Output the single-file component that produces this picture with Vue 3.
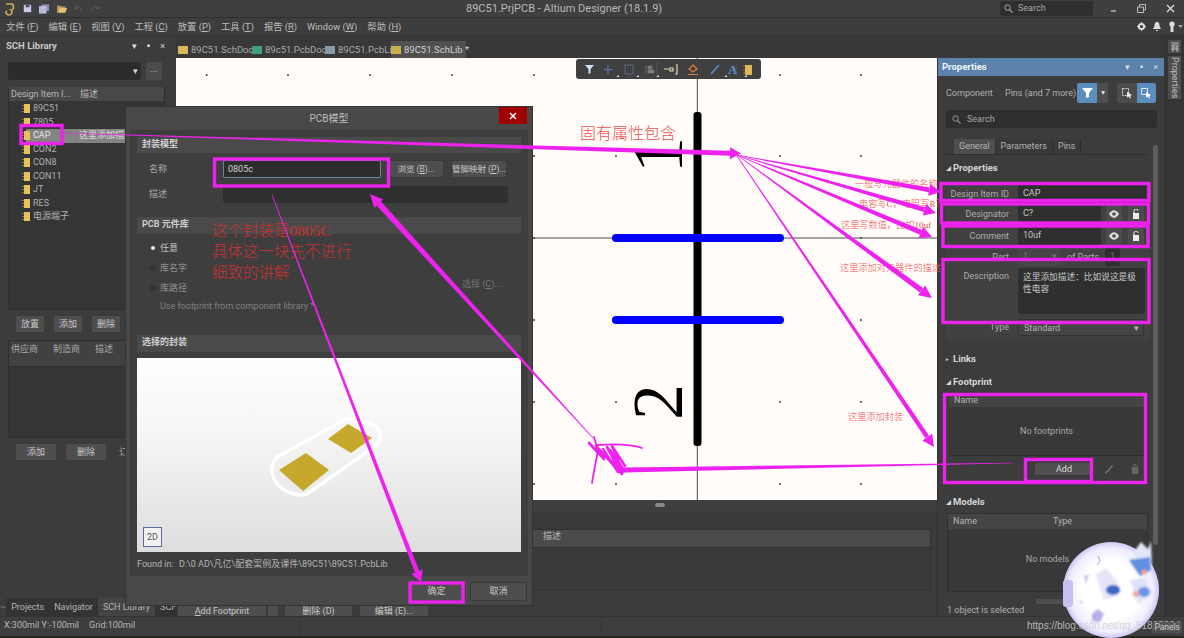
<script setup>
import { computed } from 'vue'

const menus = [
  ['文件', 'F'], ['编辑', 'E'], ['视图', 'V'], ['工程', 'C'], ['放置', 'P'],
  ['工具', 'T'], ['报告', 'R'], ['Window', 'W'], ['帮助', 'H'],
]
const docTabs = [
  { name: '89C51.SchDoc', color: '#d8b95a', width: 74 },
  { name: '89c51.PcbDoc', color: '#3fa07a', width: 73 },
  { name: '89C51.PcbLib', color: '#8a98a8', width: 66 },
  { name: '89C51.SchLib *', color: '#c9b24d', width: 75, active: true },
]
const components = ['89C51', '7805', 'CAP', 'CON2', 'CON8', 'CON11', 'JT', 'RES', '电源端子']
const gridX = [206.7, 288, 370, 452, 534, 616, 780, 861]
const gridY = [75, 156, 238, 320, 402, 484]

// Annotation strokes drawn on top of the screenshot: thin at the start, fat at the arrow tip.
const arrows = [
  { from: [63, 133], to: [741, 153.5], w: [0.6, 5], head: 11 },
  { from: [737, 155], to: [941, 192], w: [0.6, 5], head: 12 },
  { from: [737, 155], to: [936, 213], w: [0.6, 5], head: 12 },
  { from: [737, 155], to: [932, 237], w: [0.6, 5], head: 12 },
  { from: [737, 155], to: [932, 298], w: [0.6, 5.5], head: 13 },
  { from: [737, 156], to: [934, 447], w: [0.8, 4.5], head: 12 },
  { from: [593, 438], to: [370, 194], w: [0.8, 6], head: 13 },
  { from: [272, 195], to: [421, 582], w: [0.7, 4.5], head: 11 },
  { from: [1012, 463], to: [624, 470], w: [0.4, 5], head: 0 },
]
const arrowShapes = computed(() =>
  arrows.map(({ from, to, w, head }) => {
    const dx = to[0] - from[0]
    const dy = to[1] - from[1]
    const len = Math.hypot(dx, dy)
    const ux = dx / len
    const uy = dy / len
    const nx = -uy
    const ny = ux
    const ex = to[0] - ux * head
    const ey = to[1] - uy * head
    const body = [
      [from[0] + (nx * w[0]) / 2, from[1] + (ny * w[0]) / 2],
      [ex + (nx * w[1]) / 2, ey + (ny * w[1]) / 2],
      [ex - (nx * w[1]) / 2, ey - (ny * w[1]) / 2],
      [from[0] - (nx * w[0]) / 2, from[1] - (ny * w[0]) / 2],
    ]
    const tip = [[ex + nx * 6, ey + ny * 6], to, [ex - nx * 6, ey - ny * 6]]
    return {
      body: body.map((p) => p.join(',')).join(' '),
      tip: head ? tip.map((p) => p.join(',')).join(' ') : '',
    }
  })
)
const boxes = [
  [21, 125.5, 41, 18], [214.5, 159, 174, 27], [941, 183.5, 208, 17], [941.5, 204, 207, 19],
  [943, 226, 205, 20.5], [943, 259.5, 206, 63], [944.5, 394.5, 201, 88], [1025.5, 459.5, 66, 22],
  [410, 583, 53, 19],
]
const notes = [
  { text: '一般写元器件的名称', x: 855, y: 187, size: 9.2 },
  { text: '电容写C，电阻写R？', x: 859, y: 207, size: 9.2 },
  { text: '这里写数值，比如10uf', x: 841, y: 228, size: 9.2 },
  { text: '这里添加对元器件的描述', x: 840, y: 271, size: 9.2 },
  { text: '这里添加封装', x: 848, y: 420, size: 9.2 },
  { text: '固有属性包含', x: 580, y: 139, size: 16 },
]
</script>

<template>
  <div class="app">
    <header class="titlebar">
      <div class="quick">
        <svg width="12" height="14" viewBox="0 0 12 14"><path d="M3 2h4a3 3 0 0 1 1 6c2 1 1 5-2 5-3 0-4-3-2-4" fill="none" stroke="#c9a95c" stroke-width="1.6" /></svg>
        <svg width="9" height="9" viewBox="0 0 11 11"><path d="M1 1h9v9H1z" fill="#c8cce8" /><path d="M3 1h5v3H3z" fill="#555" /></svg>
        <svg width="10" height="10" viewBox="0 0 12 11"><path d="M3 0h9v8H3z" fill="#8f92b8" /><path d="M0 2h9v9H0z" fill="#b9bcd8" /></svg>
        <svg width="10" height="9" viewBox="0 0 13 11"><path d="M0 2h5l1 1h5v2H3L1 11H0z" fill="#b8985a" /><path d="M3 5h10l-2 6H1z" fill="#e2c074" /></svg>
        <svg width="9" height="8" viewBox="0 0 11 9"><path d="M1 4c3-3 7-3 9 3M1 1v3h3" fill="none" stroke="#5f5f5f" stroke-width="1.2" /></svg>
        <svg width="9" height="8" viewBox="0 0 11 9"><path d="M10 4C7 1 3 1 1 7M10 1v3H7" fill="none" stroke="#5f5f5f" stroke-width="1.2" /></svg>
      </div>
      <div class="app-title">89C51.PrjPCB - Altium Designer (18.1.9)</div>
      <div class="top-search">
        <svg width="9" height="9" viewBox="0 0 9 9"><circle cx="3.6" cy="3.6" r="2.7" fill="none" stroke="#aaa" /><path d="M5.6 5.6 8.6 8.6" stroke="#aaa" stroke-width="1.2" /></svg>
        Search
      </div>
      <div class="win-btns">
        <svg width="7" height="7" viewBox="0 0 7 7"><path d="M1 6h5" stroke="#bbb" stroke-width="1.4" /></svg>
        <svg width="9" height="9" viewBox="0 0 9 9"><path d="M.5 3h6v5.5h-6zM2.5 3V.5h6v5.5H7" fill="none" stroke="#bbb" /></svg>
        <svg width="9" height="9" viewBox="0 0 9 9"><path d="M1 1l7 7M8 1 1 8" stroke="#ddd" stroke-width="1.3" /></svg>
      </div>
    </header>

    <nav class="menubar">
      <span v-for="[label, key] in menus" :key="key" class="menu-item">{{ label }} (<u>{{ key }}</u>)</span>
      <div class="menu-right">
        <svg width="9" height="9" viewBox="0 0 9 9"><circle cx="4.5" cy="4.5" r="2.6" fill="none" stroke="#ddd" stroke-width="2" /><path d="M4.5 0v2M4.5 7v2M0 4.5h2M7 4.5h2" stroke="#ddd" /></svg>
        <svg width="8" height="9" viewBox="0 0 8 9"><path d="M4 0c2 0 2.500 2 2.500 4L8 7H0l1.500-3C1.500 2 2 0 4 0zM3 8h2v1H3z" fill="#ddd" /></svg>
        <svg width="15" height="11" viewBox="0 0 15 11"><circle cx="4" cy="3" r="2.600" fill="#ddd" /><path d="M2.500 5h3v6h-3z" fill="#ddd" /><path d="M10 4h5l-2.500 3z" fill="#aaa" /></svg>
      </div>
    </nav>

    <div class="main">
      <aside class="left">
        <div class="left-head">
          <b>SCH Library</b>
          <span class="head-icons">▾ <i>▪</i> ×</span>
        </div>
        <div class="picker">
          <div class="picker-field"><em>▾</em></div>
          <div class="picker-btn">...</div>
        </div>
        <div class="list">
          <div class="list-head"><span class="col-id">Design Item I...</span><span>描述</span></div>
          <div v-for="c in components" :key="c" class="list-row" :class="{ selected: c === 'CAP' }">
            <svg width="8" height="9" viewBox="0 0 8 9"><path d="M2 0h6v9H2z" fill="#e6c25a" /><path d="M0 1h2v1H0zM0 4h2v1H0zM0 7h2v1H0z" fill="#8a7434" /></svg>
            <span class="row-name">{{ c }}</span>
            <span v-if="c === 'CAP'" class="row-desc">这里添加描述</span>
          </div>
        </div>
        <div class="btn-row small">
          <button>放置</button><button>添加</button><button>删除</button>
        </div>
        <div class="supplier">
          <div class="supplier-head"><span>供应商</span><span>制造商</span><span>描述</span></div>
        </div>
        <div class="btn-row wide">
          <button>添加</button><button>删除</button><span class="cut">订</span>
        </div>
        <div class="panel-tabs">
          <span class="tilde">~</span>
          <span class="ptab">Projects</span><span class="ptab">Navigator</span>
          <span class="ptab on">SCH Library</span><span class="ptab">SCF</span>
        </div>
      </aside>

      <div class="center">
        <div class="doc-tabs">
          <div
            v-for="t in docTabs"
            :key="t.name"
            class="doc-tab"
            :class="{ active: t.active }"
            :style="{ width: t.width + 'px' }"
          >
            <i :style="{ background: t.color }"></i>{{ t.name }}
          </div>
        </div>
        <div class="work">
          <div class="work-main">
            <div class="canvas">
              <svg class="sheet" width="761" height="442" viewBox="176 58 761 442">
                <g fill="#222">
                  <template v-for="y in gridY" :key="y">
                    <rect v-for="x in gridX" :key="x" :x="x - 0.8" :y="y - 0.8" width="1.6" height="1.6" />
                  </template>
                </g>
                <path d="M697.300 58V500M176 238H937" stroke="#4a4a4a" />
                <rect x="693.500" y="112" width="8" height="334" rx="3" fill="#000" />
                <rect x="612" y="234" width="172" height="8" rx="4" fill="#0000ff" />
                <rect x="612" y="316" width="172" height="8" rx="4" fill="#0000ff" />
                <text class="digit" transform="translate(682 173) rotate(-90)">1</text>
                <text class="digit" transform="translate(682 420) rotate(-90)">2</text>
              </svg>
              <div class="float-bar">
                <svg width="185" height="20" viewBox="0 0 185 20">
                  <path d="M9 6h9l-3.500 4v4l-2 1v-5z" fill="#cfe6ee" />
                  <path d="M32 6v9M28 10.500h9" stroke="#5a72b8" stroke-width="1.200" />
                  <rect x="49" y="6" width="8" height="9" fill="none" stroke="#6f7fae" stroke-dasharray="1.500 1" />
                  <path d="M70 6v9M72 7h4v3h-4zM72 11h6v3h-6z" fill="#7d7d7d" stroke="#7d7d7d" stroke-width=".6" />
                  <path d="M88 10h5M94 9h3v3h-3zM101 5v10h-2" fill="none" stroke="#e8dcb0" stroke-width="1.200" />
                  <path d="M117 6l4 4-4 3-4-3zM112 15.500h10" fill="none" stroke="#e07b3c" stroke-width="1.200" />
                  <path d="M135 15l8-9" stroke="#5d95d8" stroke-width="1.400" />
                  <text class="tool-a" x="152" y="15">A</text>
                  <path d="M169 6h7v10h-7z" fill="#dcb956" />
                  <path d="M167 7h2M167 11h2M167 14h2" stroke="#8a7434" />
                  <path d="M81 3v14M160 3v14" stroke="#555" />
                  <path d="M40 18l3-2v2zM60 18l3-2v2zM80 18l3-2v2zM148 18l3-2v2zM168 18l3-2v2z" fill="#ddd" />
                </svg>
              </div>
            </div>
            <div class="splitter"><i></i></div>
            <div class="msg-table">
              <div class="msg-head"><span>描述</span></div>
            </div>
            <div class="bottom-btns">
              <button class="b1"><u>A</u>dd Footprint</button><button class="b2"></button>
              <button class="b3">删除 (D)</button><button class="b4">编辑 (E)...</button>
            </div>
          </div>

          <section class="props">
            <div class="props-head">
              <b>Properties</b>
              <span class="head-icons">▾ <i>▪</i> ×</span>
            </div>
            <div class="props-bar">
              <span class="p-kind">Component</span>
              <span class="p-pins">Pins (and 7 more)</span>
              <div class="filter-btn">
                <svg width="11" height="10" viewBox="0 0 11 10"><path d="M0 0h11L7 5v4L4 10V5z" fill="#fff" /></svg>
              </div>
              <div class="filter-drop">▾</div>
              <div class="sel-a">
                <svg width="11" height="11" viewBox="0 0 11 11"><path d="M.5.500h6v7h-6z" fill="none" stroke="#ddd" stroke-dasharray="2 1" /><path d="M5 4l5 3-2 1 1 2-1 .5-1-2-2 1z" fill="#eee" /></svg>
              </div>
              <div class="sel-b">
                <svg width="11" height="11" viewBox="0 0 11 11"><path d="M.5.500h6v6h-6z" fill="none" stroke="#e0e8f4" /><path d="M5 4l5 3-2 1 1 2-1 .5-1-2-2 1z" fill="#fff" /></svg>
              </div>
            </div>
            <div class="props-search">
              <svg width="9" height="9" viewBox="0 0 9 9"><circle cx="3.600" cy="3.600" r="2.700" fill="none" stroke="#999" /><path d="M5.600 5.600 8.600 8.600" stroke="#999" stroke-width="1.200" /></svg>
              Search
            </div>
            <div class="props-scroll"><i></i></div>
            <div class="props-tabs">
              <span class="on">General</span><span>Parameters</span><span>Pins</span>
            </div>
            <h4 class="sec sec-props"><em>◢</em>Properties</h4>
            <div class="group">
              <div class="row"><label>Design Item ID</label><div class="val grow">CAP</div></div>
              <div class="row"><label>Designator</label><div class="val short">C?</div>
                <span class="ico">
                  <svg width="10" height="8" viewBox="0 0 10 8"><path d="M0 4c3-5 7-5 10 0-3 5-7 5-10 0z" fill="#ddd" /><circle cx="5" cy="4" r="1.800" fill="#4c4c4c" /></svg>
                </span>
                <span class="ico">
                  <svg width="8" height="10" viewBox="0 0 8 10"><path d="M1 4h6v6H1z" fill="#eee" /><path d="M2 4V2a2 2 0 0 1 4 0" fill="none" stroke="#eee" /></svg>
                </span>
              </div>
              <div class="row gap"><label>Comment</label><div class="val short">10uf</div>
                <span class="ico">
                  <svg width="10" height="8" viewBox="0 0 10 8"><path d="M0 4c3-5 7-5 10 0-3 5-7 5-10 0z" fill="#ddd" /><circle cx="5" cy="4" r="1.800" fill="#4c4c4c" /></svg>
                </span>
                <span class="ico">
                  <svg width="8" height="10" viewBox="0 0 8 10"><path d="M1 4h6v6H1z" fill="#eee" /><path d="M2 4V2a2 2 0 0 1 4 0" fill="none" stroke="#eee" /></svg>
                </span>
              </div>
              <div class="row"><label>Part</label><div class="val part">1<em>▾</em></div><span class="of">of Parts</span><div class="val tiny">1</div></div>
              <div class="row desc"><label>Description</label><div class="val area">这里添加描述：比如说这是极性电容</div></div>
              <div class="row"><label>Type</label><div class="val select">Standard<em>▾</em></div></div>
            </div>
            <h4 class="sec sec-links"><em>▸</em>Links</h4>
            <h4 class="sec sec-foot"><em>◢</em>Footprint</h4>
            <div class="foot-table">
              <div class="t-head"><span>Name</span></div>
              <div class="t-empty">No footprints</div>
              <div class="t-actions">
                <button class="add">Add</button>
                <svg width="10" height="10" viewBox="0 0 10 10"><path d="M1 9l7-8 1 1-7 8z" fill="#777" /></svg>
                <svg width="8" height="10" viewBox="0 0 8 10"><path d="M0 1.500h8M1 3h6v7H1zM3 0h2v1H3z" fill="#666" stroke="#666" stroke-width=".5" /></svg>
              </div>
            </div>
            <h4 class="sec sec-models"><em>◢</em>Models</h4>
            <div class="models-table">
              <div class="t-head"><span class="m-name">Name</span><span>Type</span></div>
              <div class="m-empty">No models</div>
            </div>
            <div class="models-foot"><button></button></div>
            <div class="props-status">1 object is selected</div>
          </section>
        </div>
      </div>

      <aside class="strip">
        <div class="strip-icon">
          <svg width="10" height="10" viewBox="0 0 10 10"><path d="M1 1h8M2 3h6v2H2zM1 7h8M3 5v5M7 5v5" stroke="#bbb" fill="none" /></svg>
        </div>
        <div class="strip-tab">Properties</div>
      </aside>
    </div>

    <footer class="status">
      <span class="coords">X:300mil Y:-100mil</span>
      <span class="grid-size">Grid:100mil</span>
      <i class="div1"></i><i class="div2"></i>
    </footer>

    <!-- modal dialog over the workspace -->
    <div class="dialog">
      <div class="dlg-title">PCB模型
        <div class="dlg-close">
          <svg width="8" height="8" viewBox="0 0 8 8"><path d="M1 1l6 6M7 1 1 7" stroke="#fff" stroke-width="1.500" /></svg>
        </div>
      </div>
      <div class="dlg-body">
        <div class="dlg-sec">封装模型</div>
        <div class="dlg-row first">
          <label>名称</label>
          <div class="dlg-input">0805c</div>
          <button class="dlg-btn">浏览 (<u>B</u>)...</button>
          <button class="dlg-btn">管脚映射 (<u>P</u>)...</button>
        </div>
        <div class="dlg-row second">
          <label>描述</label>
          <div class="dlg-input dim"></div>
        </div>
        <div class="dlg-sec lib">PCB 元件库</div>
        <div class="radio on"><i></i>任意</div>
        <div class="radio"><i></i>库名字</div>
        <div class="radio"><i></i>库路径<span class="pick">选择 (<u>C</u>)...</span></div>
        <div class="use-lib">Use footprint from component library *</div>
        <div class="dlg-sec chosen">选择的封装</div>
        <div class="preview">
          <svg width="384" height="194" viewBox="137 358 384 194">
            <path d="M307 494 374 447a13 13 0 0 0 -2 -23 L352 419a10 10 0 0 0 -8 1 L279 456C265 466 272 492 300 495z" fill="none" stroke="#fff" stroke-width="3.500" />
            <path d="M279 470 306 453 329 470 303 491z" fill="#c6a92c" />
            <path d="M328 439 348 424 372 438 351 453z" fill="#c6a92c" />
          </svg>
          <div class="two-d">2D</div>
        </div>
        <div class="found"><span class="found-label">Found in:</span>D:\0 AD\凡亿\配套案例及课件\89C51\89C51.PcbLib</div>
      </div>
      <div class="dlg-foot">
        <button class="ok">确定</button>
        <button>取消</button>
      </div>
      <div class="dlg-note">这个封装是0805C<br />具体这一块先不进行<br />细致的讲解</div>
    </div>

    <!-- hand-drawn annotations on the screenshot -->
    <svg class="marks" width="1184" height="638" viewBox="0 0 1184 638">
      <text v-for="n in notes" :key="n.text" class="note" :x="n.x" :y="n.y" :font-size="n.size">{{ n.text }}</text>
      <g fill="#ee22ee">
        <template v-for="(a, i) in arrowShapes" :key="i">
          <polygon :points="a.body" />
          <polygon v-if="a.tip" :points="a.tip" />
        </template>
      </g>
      <g fill="none" stroke="#ee22ee" stroke-width="1.800" stroke-linecap="round" stroke-linejoin="round">
        <path d="M592 483C594 470 596 462 598 450L594 437" />
        <path d="M597 445C610 444 628 443 642 448" />
        <path d="M589 443 604 459 596 446 622 474 607 447 623 472 612 446 625 466" stroke-width="2.600" />
        <path d="M603 449 618 472 610 450 624 470" stroke-width="2.600" />
      </g>
      <g fill="none" stroke="#ee22ee" stroke-width="3.400">
        <rect v-for="b in boxes" :key="b[0] + '-' + b[1]" :x="b[0]" :y="b[1]" :width="b[2]" :height="b[3]" />
      </g>
    </svg>

    <!-- round avatar sticker and blog address stamped over the corner -->
    <svg class="sticker" width="124" height="108" viewBox="1060 530 124 108">
      <defs>
        <radialGradient id="disc" cx="50%" cy="50%" r="50%">
          <stop offset="0.600" stop-color="#ffffff" />
          <stop offset="0.880" stop-color="#f0ecfd" />
          <stop offset="1" stop-color="#cfc5f4" />
        </radialGradient>
        <filter id="soft" x="-20%" y="-20%" width="140%" height="140%"><feGaussianBlur stdDeviation="1.200" /></filter>
      </defs>
      <circle cx="1111" cy="590" r="48" fill="url(#disc)" />
      <rect x="1063" y="580" width="10" height="27" rx="3" fill="#c9c0f0" />
      <g filter="url(#soft)">
        <path d="M1134 552 1141 542 1148 549 1151 541 1152 570 1136 574z" fill="#e2e8fb" />
        <path d="M1129 560 1150 557 1151 570 1140 576z" fill="#5f8fe0" />
        <circle cx="1144" cy="572" r="2.600" fill="#f0a090" />
        <path d="M1096 575 1106 568 1118 582 1118 596 1104 600z" fill="#e6e4f8" />
        <ellipse cx="1113" cy="590" rx="7" ry="5" fill="#3f66c8" />
        <path d="M1130 580 1146 578 1150 596 1138 604z" fill="#dfe3fa" />
        <ellipse cx="1144" cy="592" rx="6" ry="5" fill="#6c94e6" />
        <circle cx="1136" cy="594" r="3" fill="#f2a898" />
        <path d="M1092 614 1098 609 1104 614 1100 622 1092 621z" fill="#b9aee8" />
        <path d="M1084 576 1089 574 1086 584z" fill="#c8c2ec" />
        <circle cx="1081" cy="602" r="1.400" fill="#c8c2ec" />
      </g>
      <path d="M1098 556a6 6 0 0 1 -1 9" fill="none" stroke="#c5bdea" stroke-width="1.500" />
    </svg>
    <div class="blog-url">https://blog.csdn.net/qq_51835824</div>
    <div class="panels">Panels</div>
  </div>
</template>

<style scoped>
.app {
  position: relative;
  display: flex;
  flex-direction: column;
  width: 1184px;
  height: 638px;
  overflow: hidden;
  background: #3b3b3b;
  color: #c4c4c4;
  font-family: Roboto, "Noto Sans CJK SC", sans-serif;
  font-size: 9px;
  line-height: 1;
  white-space: nowrap;
}
button {
  padding: 0;
  border: 1px solid #3a3a3a;
  border-radius: 2px;
  background: #4e4e4e;
  color: #c8c8c8;
  font: inherit;
}
.titlebar {
  position: relative;
  display: flex;
  align-items: center;
  flex: none;
  height: 18px;
  border-bottom: 1px solid #2e2e2e;
  background: #3f3f3f;
  box-sizing: border-box;
}
.quick {
  display: flex;
  align-items: center;
  gap: 7.500px;
  padding-left: 3px;
}
.app-title {
  position: absolute;
  left: 466px;
  font-size: 11px;
  color: #b9b9b9;
}
.top-search {
  display: flex;
  align-items: center;
  gap: 5px;
  width: 93px;
  height: 15px;
  margin-left: auto;
  padding-left: 4px;
  border-radius: 2px;
  background: #2f2f2f;
  box-sizing: border-box;
  color: #a8a8a8;
}
.win-btns {
  display: flex;
  align-items: center;
  gap: 20px;
  margin: 0 9px 0 17px;
}
.menubar {
  display: flex;
  align-items: center;
  flex: none;
  gap: 10px;
  height: 18px;
  padding-left: 6px;
  background: #3d3d3d;
  border-bottom: 1px solid #353535;
  box-sizing: border-box;
  font-size: 9.300px;
  color: #bdbdbd;
}
.menu-right {
  display: flex;
  align-items: center;
  gap: 7px;
  margin-left: auto;
  padding-right: 1px;
}
.main {
  display: flex;
  flex: none;
  height: 580px;
}
.left {
  display: flex;
  flex-direction: column;
  flex: none;
  width: 172px;
  margin-right: 4px;
  background: #3c3c3c;
}
.left-head {
  display: flex;
  align-items: center;
  justify-content: space-between;
  height: 20px;
  flex: none;
  padding: 0 6px;
  font-size: 9.500px;
  color: #c8c8c8;
}
.head-icons {
  font-size: 9px;
  color: #ddd;
  letter-spacing: 1px;
}
.head-icons i {
  font-style: normal;
  margin: 0 3px;
}
.picker {
  display: flex;
  gap: 5px;
  height: 18px;
  margin: 6px 0 0 8px;
}
.picker-field {
  display: flex;
  align-items: center;
  justify-content: flex-end;
  width: 133px;
  padding-right: 3px;
  border-radius: 2px;
  background: #2c2c2c;
  box-sizing: border-box;
}
.picker-field em {
  font-style: normal;
  color: #ddd;
}
.picker-btn {
  width: 16px;
  text-align: center;
  line-height: 14px;
  border-radius: 2px;
  background: #4b4b4b;
  color: #ccc;
}
.list {
  height: 223px;
  width: 157px;
  margin: 7px 0 0 8px;
  flex: none;
  border: 1px solid #2f2f2f;
  border-top: 0;
  background: #353535;
  box-sizing: border-box;
}
.list-head {
  display: flex;
  align-items: center;
  height: 14px;
  padding-left: 2px;
  margin-bottom: 1px;
  background: #484848;
  color: #b8b8b8;
}
.col-id {
  width: 69px;
}
.list-row {
  display: flex;
  align-items: center;
  height: 13.500px;
  padding-left: 13px;
  color: #b0b0b0;
}
.row-name {
  margin-left: 3px;
  width: 46px;
}
.list-row.selected {
  background: linear-gradient(90deg, #353535 17px, #838383 17px);
  color: #e8e8e8;
}
.row-desc {
  color: #ddd;
}
.btn-row {
  display: flex;
  flex: none;
  height: 18px;
  margin-top: 5px;
}
.btn-row.small {
  gap: 8px;
  padding-left: 15px;
}
.btn-row.small button {
  width: 30px;
}
.btn-row.wide {
  gap: 8px;
  padding-left: 15px;
  align-items: center;
}
.btn-row.wide button {
  width: 42px;
  height: 18px;
}
.cut {
  margin-left: 4px;
  color: #aaa;
}
.supplier {
  flex: none;
  height: 98px;
  width: 157px;
  margin: 7px 0 0 8px;
  border: 1px solid #2f2f2f;
  background: #353535;
  box-sizing: border-box;
}
.supplier-head {
  display: grid;
  grid-template-columns: 42px 42px 1fr;
  height: 26px;
  padding: 4px 0 0 2px;
  background: #414141;
  border-bottom: 1px solid #2f2f2f;
  box-sizing: border-box;
  color: #aaa;
}
.panel-tabs {
  display: flex;
  align-items: center;
  height: 18px;
  margin-top: auto;
  color: #b4b4b4;
}
.tilde {
  width: 13px;
  text-align: center;
  color: #888;
}
.ptab {
  padding: 0 5px;
  line-height: 18px;
  background: #333;
}
.ptab.on {
  background: #444;
}
.center {
  display: flex;
  flex-direction: column;
  flex: none;
  width: 988px;
}
.doc-tabs {
  display: flex;
  align-items: flex-end;
  flex: none;
  height: 22px;
  padding-left: 2px;
  background: #383838;
  box-sizing: border-box;
}
.doc-tab {
  display: flex;
  align-items: center;
  flex: none;
  gap: 3px;
  height: 17px;
  font-size: 9.500px;
  color: #aaa;
}
.doc-tab i {
  flex: none;
  width: 10px;
  height: 8px;
}
.doc-tab.active {
  background: #505050;
  color: #d0d0d0;
}
.work {
  display: flex;
  flex: 1;
  min-height: 0;
}
.work-main {
  display: flex;
  flex-direction: column;
  flex: none;
  width: 761px;
}
.canvas {
  position: relative;
  flex: none;
  height: 442px;
  background: #fffcf9;
}
.sheet {
  display: block;
}
.digit {
  font-family: "Liberation Serif", serif;
  font-size: 72px;
  fill: #000;
}
.float-bar {
  position: absolute;
  left: 400px;
  top: 1px;
  width: 185px;
  height: 20px;
  border-radius: 3px;
  background: #404040;
}
.float-bar svg {
  display: block;
}
.tool-a {
  font-family: "Liberation Serif", serif;
  font-weight: 700;
  font-size: 13px;
  fill: #5d95d8;
}
.splitter {
  flex: none;
  height: 29px;
  padding: 3px 0 0 479px;
  box-sizing: border-box;
  background: linear-gradient(#3f3f3f 12px, #393939 12px);
}
.splitter i {
  display: block;
  width: 10px;
  height: 4px;
  border-radius: 2px;
  background: #8a8a8a;
}
.msg-table {
  flex: none;
  width: 755px;
  height: 61px;
  border: 1px solid #303030;
  background: #3a3a3a;
  box-sizing: border-box;
}
.msg-head {
  height: 15px;
  padding: 2px 0 0 366px;
  background: #4a4a4a;
  border-bottom: 1px solid #303030;
  color: #bbb;
}
.bottom-btns {
  display: flex;
  flex: none;
  height: 14px;
  margin-top: 14px;
  padding-left: 1px;
}
.bottom-btns button {
  height: 14px;
}
.b1 {
  width: 90px;
}
.b2 {
  width: 12px;
  margin-right: 5px;
}
.b3 {
  width: 69px;
  margin-right: 6px;
}
.b4 {
  width: 70px;
}
.props {
  position: relative;
  display: flex;
  flex-direction: column;
  flex: none;
  width: 227px;
  background: #3c3c3c;
  border-left: 1px solid #333;
  box-sizing: border-box;
}
.props-head {
  display: flex;
  align-items: center;
  justify-content: space-between;
  flex: none;
  height: 18px;
  padding: 0 5px 0 4px;
  background: #5b82ab;
  font-size: 9.500px;
  color: #f0f4f8;
}
.props-bar {
  display: flex;
  align-items: center;
  flex: none;
  height: 20px;
  margin: 7px 0 0 8px;
  color: #b0b0b0;
}
.p-kind {
  width: 59px;
}
.p-pins {
  width: 72px;
}
.filter-btn,
.sel-b {
  display: flex;
  align-items: center;
  justify-content: center;
  width: 20px;
  height: 20px;
  background: #5b8ebf;
}
.filter-btn {
  border-radius: 2px 0 0 2px;
}
.filter-drop {
  width: 11px;
  line-height: 20px;
  margin-right: 9px;
  text-align: center;
  border-radius: 0 2px 2px 0;
  background: #4e4e4e;
  color: #ddd;
  font-size: 8px;
}
.sel-a {
  display: flex;
  align-items: center;
  justify-content: center;
  width: 20px;
  height: 20px;
  border-radius: 2px 0 0 2px;
  background: #4c4c4c;
}
.sel-b {
  width: 19px;
  border-radius: 0 2px 2px 0;
}
.props-search {
  display: flex;
  align-items: center;
  flex: none;
  gap: 6px;
  width: 211px;
  height: 18px;
  margin: 7px 0 0 8px;
  padding-left: 6px;
  border-radius: 2px;
  background: #2f2f2f;
  box-sizing: border-box;
  color: #a5a5a5;
}
.props-scroll {
  position: absolute;
  left: 215px;
  top: 87px;
  width: 5px;
  height: 400px;
}
.props-scroll i {
  display: block;
  height: 100%;
  background: #5e5e5e;
  border-radius: 2px;
}
.props-tabs {
  display: flex;
  flex: none;
  width: 202px;
  height: 16px;
  margin: 11px 0 0 8px;
  padding-left: 8px;
  border-bottom: 1px solid #2e2e2e;
  box-sizing: border-box;
  color: #b4b4b4;
}
.props-tabs span {
  padding: 3px 5px 0;
  background: #393939;
  border-right: 1px solid #2e2e2e;
}
.props-tabs .on {
  background: #4e4e4e;
}
.sec {
  flex: none;
  height: 14px;
  margin: 0 0 0 8px;
  font-size: 9.500px;
  font-weight: 700;
  line-height: 14px;
  color: #d4d4d4;
}
.sec em {
  display: inline-block;
  width: 6px;
  margin-right: 1px;
  font-style: normal;
  font-size: 5px;
  vertical-align: 1px;
}
.sec-props {
  margin-top: 6px;
}
.sec-links {
  margin-top: 12px;
}
.sec-foot {
  margin-top: 9px;
}
.sec-models {
  margin-top: 13px;
}
.group {
  flex: none;
  width: 204px;
  height: 157px;
  margin: 8px 0 0 8px;
  padding-top: 2px;
  background: #414141;
  box-sizing: border-box;
}
.row {
  display: flex;
  align-items: center;
  height: 18px;
  margin-bottom: 2px;
  color: #aeaeae;
}
.row.gap {
  margin: 4px 0 3px;
}
.row label {
  flex: none;
  width: 63px;
  margin-right: 9px;
  text-align: right;
}
.val {
  height: 18px;
  padding-left: 5px;
  line-height: 17px;
  box-sizing: border-box;
  background: #2f2f2f;
  border-radius: 2px;
  color: #c8c8c8;
}
.val.grow {
  width: 128px;
}
.val.short {
  width: 83px;
  margin-right: 5px;
}
.ico {
  display: flex;
  align-items: center;
  justify-content: center;
  width: 16px;
  height: 18px;
  margin-right: 6px;
  border-radius: 2px;
  background: #4c4c4c;
}
.val.part {
  display: flex;
  justify-content: space-between;
  width: 43px;
  padding-right: 4px;
  background: #464646;
  color: #707070;
}
.val em {
  font-style: normal;
}
.of {
  width: 44px;
  text-align: center;
}
.val.tiny {
  width: 15px;
  color: #707070;
}
.row.desc {
  align-items: flex-start;
  height: 46px;
  margin-bottom: 4px;
}
.row.desc label {
  padding-top: 4px;
}
.val.area {
  width: 127px;
  height: 46px;
  padding: 3px 3px 0 5px;
  white-space: normal;
  line-height: 12px;
  font-size: 8.700px;
  border-radius: 3px;
}
.val.select {
  display: flex;
  justify-content: space-between;
  width: 126px;
  padding-right: 4px;
  height: 17px;
  background: #454545;
  border: 1px solid #333;
  color: #b4b4b4;
}
.foot-table {
  flex: none;
  width: 195px;
  height: 88px;
  margin: 5px 0 0 11px;
  background: #383838;
}
.t-head {
  display: flex;
  align-items: center;
  height: 13px;
  padding-left: 5px;
  background: #444;
  color: #b4b4b4;
}
.t-empty {
  height: 49px;
  padding-top: 20px;
  box-sizing: border-box;
  border-bottom: 1px solid #2e2e2e;
  text-align: center;
  color: #a8a8a8;
}
.t-actions {
  display: flex;
  align-items: center;
  height: 26px;
  padding-left: 85px;
  background: #3c3c3c;
}
.add {
  width: 60px;
  height: 14px;
  margin-right: 10px;
  background: #505050;
  color: #ddd;
}
.t-actions svg:last-child {
  margin-left: 17px;
}
.models-table {
  flex: none;
  width: 201px;
  height: 79px;
  margin: 4px 0 0 9px;
  border: 1px solid #2f2f2f;
  background: #383838;
  box-sizing: border-box;
}
.models-table .t-head {
  height: 15px;
  background: #454545;
}
.m-name {
  width: 100px;
}
.m-empty {
  padding-top: 26px;
  text-align: center;
  color: #a8a8a8;
}
.models-foot {
  flex: none;
  height: 12px;
  overflow: hidden;
  padding: 6px 0 0 97px;
  box-sizing: border-box;
}
.models-foot button {
  display: block;
  width: 60px;
  height: 16px;
}
.props-status {
  flex: none;
  margin: 2px 0 0 9px;
  color: #b0b0b0;
}
.strip {
  display: flex;
  flex-direction: column;
  align-items: center;
  flex: none;
  width: 20px;
  padding: 4px 0 0 1px;
  box-sizing: border-box;
  background: #353535;
}
.strip-icon {
  display: flex;
  align-items: center;
  justify-content: center;
  width: 13px;
  height: 13px;
  background: #4e4e4e;
}
.strip-tab {
  width: 13px;
  height: 43px;
  margin-top: 3px;
  background: #4e4e4e;
  line-height: 13px;
  text-align: center;
  writing-mode: vertical-rl;
  color: #c0c0c0;
}
.status {
  position: relative;
  display: flex;
  align-items: center;
  flex: 1;
  padding: 0 0 2px 4px;
  background: #3e3e3e;
  border-bottom: 2px solid #25251c;
  border-top: 1px solid #343434;
  box-sizing: border-box;
  color: #b8b8b8;
}
.grid-size {
  margin-left: 10px;
}
.status i {
  position: absolute;
  top: 0;
  width: 1px;
  height: 100%;
  background: #343434;
}
.div1 {
  left: 300px;
}
.div2 {
  left: 601px;
}
.panels {
  position: absolute;
  right: 2px;
  top: 622px;
  padding: 1px 2px;
  background: rgba(85, 85, 85, 0.85);
  color: #ccc;
  font-size: 8.500px;
}
.dialog {
  position: absolute;
  left: 125px;
  top: 106px;
  width: 408px;
  height: 500px;
  background: #484848;
  border: 1px solid #333;
  box-sizing: border-box;
}
.dlg-title {
  position: relative;
  height: 23px;
  text-align: center;
  line-height: 23px;
  font-size: 10px;
  color: #bdbdbd;
}
.dlg-close {
  position: absolute;
  right: 5px;
  top: 0;
  display: flex;
  align-items: center;
  justify-content: center;
  width: 28px;
  height: 17px;
  background: #a00000;
}
.dlg-body {
  height: 446px;
  margin: 0 4px;
  padding: 7px 7px 0;
  background: #3e3e3e;
  box-sizing: border-box;
}
.dlg-sec {
  height: 16px;
  padding-left: 5px;
  background: #4a4a4a;
  line-height: 15px;
  font-weight: 700;
  color: #d0d0d0;
}
.dlg-sec.lib {
  height: 17px;
  margin-top: 14px;
}
.dlg-sec.chosen {
  height: 17px;
  margin-top: 19px;
}
.dlg-row {
  display: flex;
  align-items: center;
  height: 18px;
}
.dlg-row.first {
  margin-top: 7px;
}
.dlg-row.second {
  margin-top: 8px;
  height: 17px;
}
.dlg-row label {
  width: 86px;
  padding-left: 12px;
  flex: none;
  box-sizing: border-box;
  color: #aaa;
}
.dlg-input {
  width: 158px;
  height: 18px;
  margin-right: 7px;
  padding-left: 4px;
  border: 1px solid #6d8296;
  border-radius: 2px;
  background: #2d2d2d;
  box-sizing: border-box;
  line-height: 16px;
  color: #cfcfcf;
}
.dlg-input.dim {
  width: 285px;
  height: 17px;
  border: 0;
  background: #303030;
}
.dlg-btn {
  width: 56px;
  height: 18px;
  margin-right: 7px;
  font-size: 8.500px;
}
.radio {
  position: relative;
  display: flex;
  align-items: center;
  height: 20px;
  padding-left: 23px;
  color: #8e8e8e;
}
.dlg-sec.lib + .radio {
  margin-top: 4px;
}
.radio i {
  position: absolute;
  left: 13px;
  width: 6px;
  height: 6px;
  border-radius: 50%;
  background: #333;
}
.radio.on {
  color: #c4c4c4;
}
.radio.on i {
  background: #eee;
  width: 4px;
  height: 4px;
  left: 14px;
}
.pick {
  position: absolute;
  left: 325px;
  top: 2px;
  color: #777;
}
.use-lib {
  height: 14px;
  margin-top: 4px;
  padding-left: 23px;
  color: #808080;
}
.preview {
  position: relative;
  width: 384px;
  height: 194px;
  margin-top: 6px;
  background: linear-gradient(#ffffff, #f5f5f5 40%, #dedede);
}
.preview svg {
  display: block;
}
.two-d {
  position: absolute;
  left: 6px;
  bottom: 5px;
  width: 19px;
  height: 20px;
  border: 1px solid #5a6a9a;
  background: #f2f2f2;
  box-sizing: border-box;
  text-align: center;
  line-height: 18px;
  color: #555;
}
.found {
  padding-top: 8px;
  color: #b4b4b4;
}
.found-label {
  display: inline-block;
  width: 42px;
}
.dlg-foot {
  display: flex;
  justify-content: flex-end;
  gap: 5px;
  padding: 6px 5px 0 0;
}
.dlg-foot button {
  width: 57px;
  height: 19px;
}
.dlg-note {
  position: absolute;
  left: 86px;
  top: 113px;
  font-family: "Liberation Serif", "Noto Sans CJK SC", serif;
  font-size: 15.500px;
  line-height: 21px;
  font-weight: 300;
  color: #c83232;
}
.marks {
  position: absolute;
  left: 0;
  top: 0;
  pointer-events: none;
}
.note {
  font-family: "Liberation Serif", "Noto Sans CJK SC", serif;
  font-weight: 300;
  fill: #f0504f;
}
.sticker {
  position: absolute;
  left: 1060px;
  top: 530px;
}
.blog-url {
  position: absolute;
  left: 1027px;
  top: 621px;
  font-family: "Liberation Sans", sans-serif;
  font-size: 10px;
  color: rgba(205, 205, 205, 0.85);
}
</style>
